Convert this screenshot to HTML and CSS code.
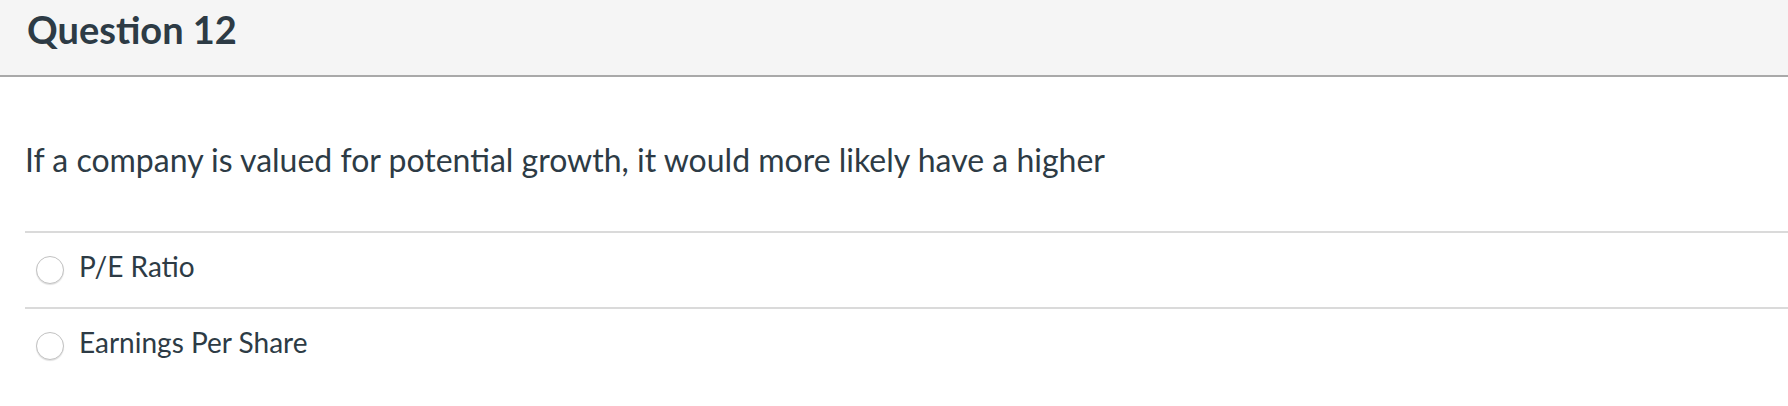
FILE: index.html
```html
<!DOCTYPE html>
<html>
<head>
<meta charset="utf-8">
<link rel="stylesheet" href="styles.css">
</head>
<body>
<div class="question">
  <div class="header"><h2 class="title">Question 12</h2></div>
  <div class="content">
    <div class="text">If a company is valued for potential growth, it would more likely have a higher</div>
    <div class="answers">
      <label class="answer"><span class="radio"></span><span class="label">P/E Ratio</span></label>
      <label class="answer"><span class="radio"></span><span class="label">Earnings Per Share</span></label>
    </div>
  </div>
</div>
</body>
</html>
```
FILE: styles.css
```css
html, body {
  margin: 0;
  padding: 0;
  background: #fff;
}
body {
  font-family: Lato, "Noto Sans", sans-serif;
  color: #2d3b45;
}
.header {
  height: 65px;
  background: #f5f5f5;
  border-bottom: 2px solid #a9a9a9;
  padding: 10px 0 0 27px;
}
.title {
  margin: 0;
  font-size: 38px;
  font-weight: 700;
  line-height: 38px;
}
.content {
  padding-left: 25px;
}
.text {
  font-size: 32px;
  line-height: 40px;
  padding-top: 63px;
  padding-bottom: 51px;
}
.answers {
  display: flex;
  flex-direction: column;
}
.answer {
  display: flex;
  align-items: center;
  height: 74px;
  border-top: 2px solid #dadada;
  padding-left: 11px;
}
.radio {
  width: 26px;
  height: 26px;
  border-radius: 50%;
  border: 1px solid #c2c2c2;
  box-shadow: 0 1px 1px rgba(0,0,0,0.12);
  background: #fff;
  flex: none;
}
.label {
  margin-left: 15px;
  margin-bottom: 8px;
  font-size: 28px;
}
```
